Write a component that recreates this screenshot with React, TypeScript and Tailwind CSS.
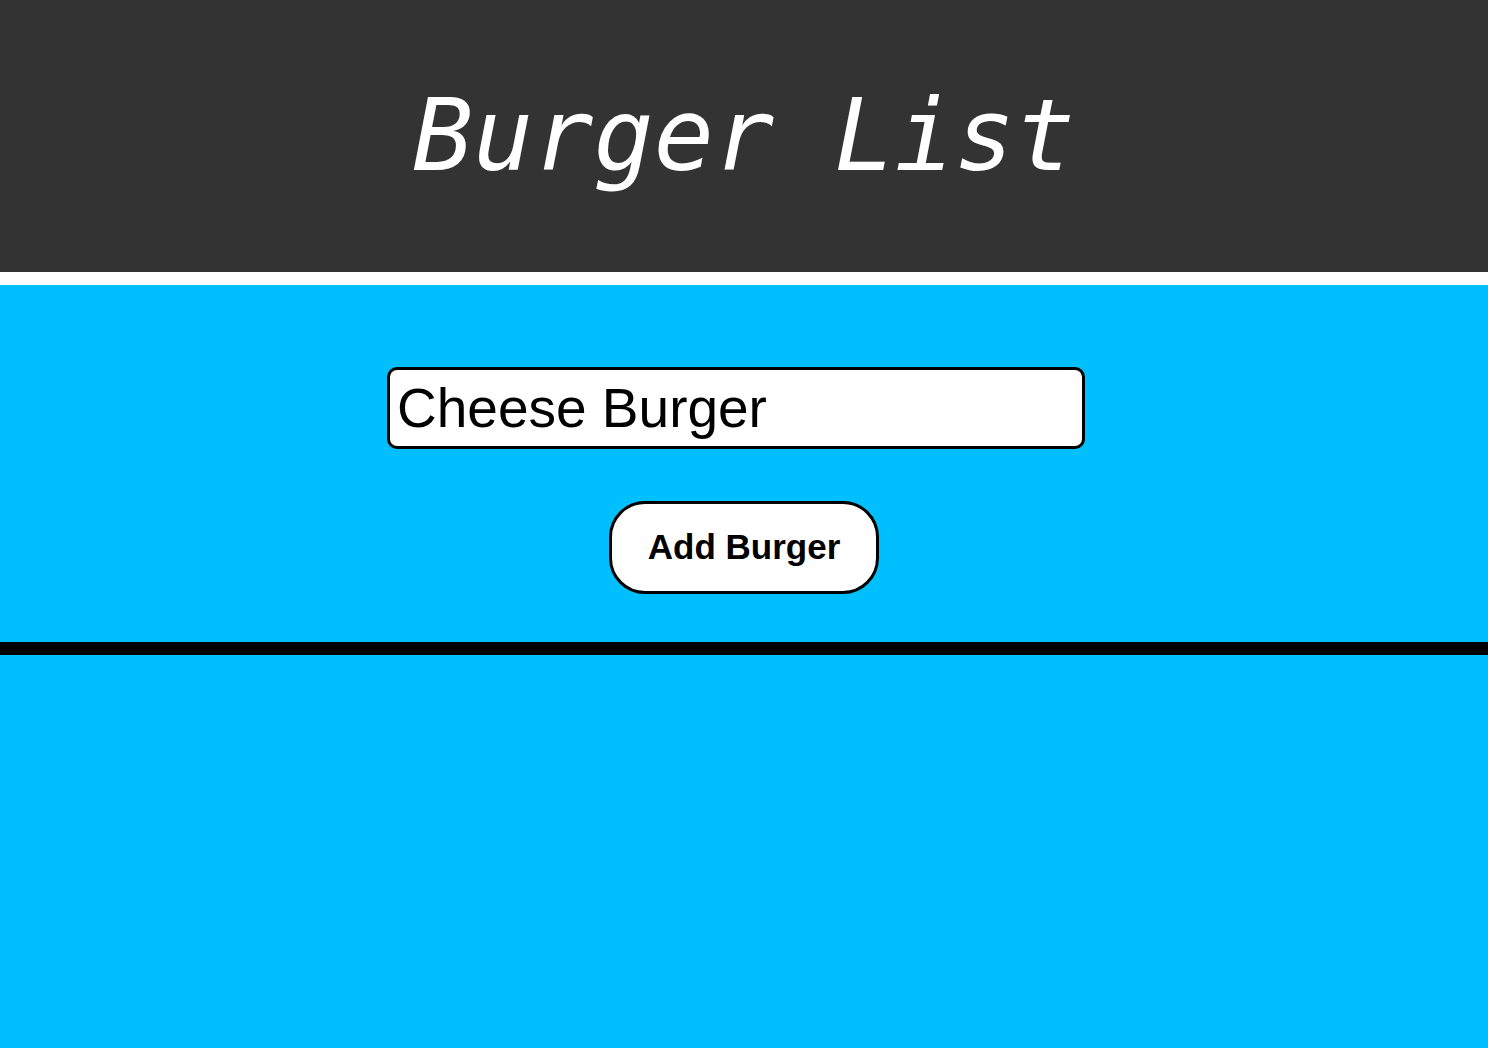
import React, { useState } from 'react'

export default function App() {
    const [burgerName, setBurgerName] = useState('Cheese Burger')

    return (
        <div className='min-h-screen bg-[#00bfff] flex flex-col'>
            <header className='h-[272px] bg-[#333333] flex items-center justify-center'>
                <h1 className='text-white italic text-[100px] leading-none font-["DejaVu_Sans_Mono",monospace]'>Burger List</h1>
            </header>
            <div className='h-[13px] bg-white'></div>
            <form
                className='flex flex-col items-center pt-[82px] pb-[48px]'
                onSubmit={(e) => e.preventDefault()}
            >
                <input
                    type='text'
                    autoFocus
                    value={burgerName}
                    onChange={(e) => setBurgerName(e.target.value)}
                    className='w-[698px] h-[82px] mr-[16px] bg-white border-[3px] border-black rounded-[10px] px-[7px] text-[55px] text-black font-["Liberation_Sans",Arial,sans-serif] outline-none caret-black'
                />
                <button
                    type='submit'
                    className='mt-[52px] w-[270px] h-[93px] bg-white border-[3px] border-black rounded-[36px] text-[35px] font-bold text-black font-["Liberation_Sans",Arial,sans-serif]'
                >
                    Add Burger
                </button>
            </form>
            <div className='h-[13px] bg-black'></div>
            <div className='flex-1'></div>
        </div>
    )
}
